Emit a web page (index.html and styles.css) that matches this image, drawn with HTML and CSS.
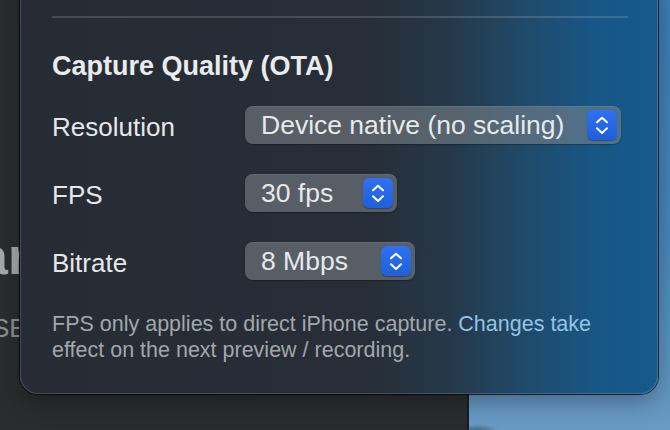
FILE: index.html
```html
<!DOCTYPE html>
<html lang="en">
<head>
<meta charset="utf-8">
<title>Capture Quality</title>
<link rel="stylesheet" href="styles.css">
</head>
<body>
<div class="desktop">
  <div class="window">
    <div class="win-title">ar</div>
    <div class="win-sub">SB</div>
  </div>
  <div class="wallpaper"></div>
</div>
<section class="panel">
  <hr class="divider">
  <h2 class="title">Capture Quality (OTA)</h2>
  <div class="form">
    <div class="row">
      <span class="label">Resolution</span>
      <div class="popup popup-res">
        <span class="value">Device native (no scaling)</span>
        <span class="stepper"><svg width="30" height="30" viewBox="0 0 30 30"><path d="M10 12.3 L15 7.7 L20 12.3 M10 18.3 L15 22.9 L20 18.3" fill="none" stroke="#fff" stroke-width="2" stroke-linecap="round" stroke-linejoin="round"/></svg></span>
      </div>
    </div>
    <div class="row">
      <span class="label">FPS</span>
      <div class="popup popup-fps">
        <span class="value">30 fps</span>
        <span class="stepper"><svg width="30" height="30" viewBox="0 0 30 30"><path d="M10 12.3 L15 7.7 L20 12.3 M10 18.3 L15 22.9 L20 18.3" fill="none" stroke="#fff" stroke-width="2" stroke-linecap="round" stroke-linejoin="round"/></svg></span>
      </div>
    </div>
    <div class="row">
      <span class="label">Bitrate</span>
      <div class="popup popup-bit">
        <span class="value">8 Mbps</span>
        <span class="stepper"><svg width="30" height="30" viewBox="0 0 30 30"><path d="M10 12.3 L15 7.7 L20 12.3 M10 18.3 L15 22.9 L20 18.3" fill="none" stroke="#fff" stroke-width="2" stroke-linecap="round" stroke-linejoin="round"/></svg></span>
      </div>
    </div>
  </div>
  <p class="note">FPS only applies to direct iPhone capture. <span class="note-tint">Changes take</span> effect on the next preview / recording.</p>
</section>
</body>
</html>
```
FILE: styles.css
```css
html, body {
  margin: 0;
  padding: 0;
}
body {
  width: 670px;
  height: 430px;
  overflow: hidden;
  position: relative;
  font-family: "Liberation Sans", Arial, sans-serif;
  background: #2a2c2f;
}
.desktop {
  display: flex;
  height: 100%;
}
.window {
  width: 469px;
  flex: none;
  box-sizing: border-box;
  background: #2a2c2f;
  border-right: 2px solid #1a1c1e;
  padding-top: 226px;
  overflow: hidden;
}
.win-title {
  font-size: 52px;
  font-weight: 700;
  line-height: 60px;
  color: #a7a8aa;
  margin-left: -21px;
  white-space: nowrap;
}
.win-sub {
  margin-top: 27px;
  font-size: 26px;
  line-height: 30px;
  color: #8d8f92;
  margin-left: -8px;
  white-space: nowrap;
}
.wallpaper {
  flex: 1;
  background:
    radial-gradient(ellipse 22px 8px at 8px 432px, #3a5876 0%, rgba(58,88,118,0) 100%),
    linear-gradient(180deg, #3a7bb4 0%, #4686bb 55%, #5e92bf 85%, #6a9ac4 100%);
}
.panel {
  position: absolute;
  left: 20px;
  top: -20px;
  width: 638px;
  height: 414px;
  box-sizing: border-box;
  padding: 36px 30px 0 32px;
  border-radius: 18px;
  background: linear-gradient(90deg, #272c34 0%, #272e37 55%, #25394b 68%, #1f4a6a 79%, #185685 90%, #155a8b 100%);
  box-shadow:
    0 0 0 1px rgba(0, 0, 0, 0.75),
    0 8px 24px rgba(0, 0, 0, 0.3),
    inset 0 0 0 1px rgba(255, 255, 255, 0.16);
}
.divider {
  margin: 0;
  border: 0;
  height: 2px;
  background: rgba(255, 255, 255, 0.15);
}
.title {
  margin: 32px 0 0;
  font-size: 27px;
  font-weight: 700;
  line-height: 32px;
  color: #e9ebed;
}
.form {
  margin-top: 24px;
  display: flex;
  flex-direction: column;
  gap: 30px;
}
.row {
  display: flex;
  align-items: center;
}
.label {
  width: 193px;
  flex: none;
  font-size: 26px;
  line-height: 30px;
  padding-top: 3px;
  color: #e5e7e9;
}
.popup {
  display: flex;
  align-items: center;
  height: 38px;
  box-sizing: border-box;
  padding: 0 4px 0 16px;
  border-radius: 8px;
  background: rgba(128, 134, 140, 0.55);
  box-shadow: 0 1px 1.5px rgba(0, 0, 0, 0.3), inset 0 1px 0 rgba(255, 255, 255, 0.08);
}
.popup-res { width: 376px; }
.popup-fps { width: 152px; }
.popup-bit { width: 170px; }
.value {
  flex: 1;
  font-size: 26.5px;
  line-height: 38px;
  color: #e7e9eb;
  white-space: nowrap;
}
.stepper {
  display: flex;
  width: 30px;
  height: 30px;
  flex: none;
  border-radius: 6px;
  background: linear-gradient(180deg, #2f71f2 0%, #1f5fd9 100%);
  box-shadow: 0 0.5px 1px rgba(0, 0, 0, 0.3);
}
.stepper svg {
  display: block;
}
.note {
  margin: 31px 0 0;
  font-size: 21.5px;
  line-height: 26px;
  color: #a2a7ac;
}
.note-tint {
  color: #96c3e3;
}
```
